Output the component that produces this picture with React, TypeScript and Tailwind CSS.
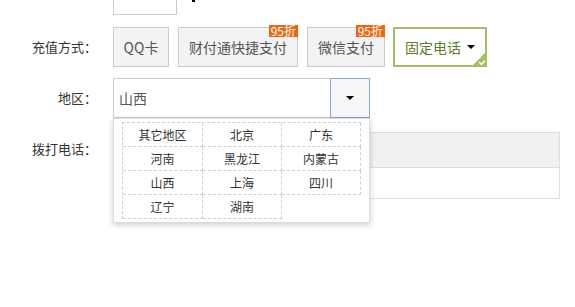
import React from "react";

const regions = ["其它地区", "北京", "广东", "河南", "黑龙江", "内蒙古", "山西", "上海", "四川", "辽宁", "湖南"];

function Badge() {
  return (
    <span className="absolute -top-[3px] -right-px h-[12px] px-[2px] bg-[#f0650e] text-white text-[12px] leading-[12px] font-['Noto_Sans_CJK_SC',sans-serif]">
      95折
    </span>
  );
}

function PayButton({ label, badge, w }: { label: string; badge?: boolean; w: string }) {
  return (
    <div className={`relative h-[40px] border border-[#cccccc] bg-[#f3f3f3] text-[14px] leading-[20px] text-[#555] flex items-center justify-center ${w}`}>
      {label}
      {badge && <Badge />}
    </div>
  );
}

export default function App() {
  return (
    <div className="relative w-[575px] h-[307px] bg-white overflow-hidden font-['Noto_Sans_CJK_SC','Liberation_Sans',sans-serif] text-[#333]">
      {/* top partial row */}
      <div className="flex">
        <div className="w-[97px]" />
        <div className="ml-[16px] w-[64px] h-[15px] border border-t-0 border-[#cccccc] bg-white" />
        <div className="ml-[15px] w-[3px] h-[2px] bg-black" />
      </div>

      {/* 充值方式 */}
      <div className="flex items-center mt-[12px]">
        <div className="w-[97px] text-right text-[13px] leading-[20px] text-[#333]">充值方式：</div>
        <div className="ml-[16px] flex">
          <PayButton label="QQ卡" w="w-[56px]" />
          <div className="ml-[9px]">
            <PayButton label="财付通快捷支付" badge w="w-[120px]" />
          </div>
          <div className="ml-[9px]">
            <PayButton label="微信支付" badge w="w-[78px]" />
          </div>
          <div className="relative ml-[8px] w-[94px] h-[40px] border-2 border-[#a3bf62] bg-white text-[14px] leading-[20px] text-[#5d7b2c] flex items-center justify-center">
            固定电话
            <span className="ml-[6px] w-0 h-0 border-x-[4px] border-x-transparent border-t-[4px] border-t-black" />
            <svg className="absolute -right-[2px] -bottom-[2px]" width="16" height="16" viewBox="0 0 16 16">
              <polygon points="16,0 16,16 0,16" fill="#a3bf62" />
              <polyline points="8,11 10.5,13.5 14,9.5" fill="none" stroke="#ffffff" strokeWidth="1.3" />
            </svg>
          </div>
        </div>
      </div>

      {/* 地区 */}
      <div className="flex items-center mt-[11px]">
        <div className="w-[97px] text-right text-[13px] leading-[20px] text-[#333]">地区：</div>
        <div className="relative ml-[16px] flex h-[40px] w-[257px] z-10">
          <div className="w-[217px] border border-r-0 border-[#cccccc] pl-[5px] text-[14px] leading-[20px] text-[#555] flex items-center bg-white">
            山西
          </div>
          <div className="w-[40px] border border-[#87a5d5] bg-[#f7f7f7] flex items-center justify-center">
            <span className="w-0 h-0 border-x-[4px] border-x-transparent border-t-[4px] border-t-black" />
          </div>
          <div className="absolute top-full left-0 w-[257px] bg-white border border-[#dddddd] shadow-[0_2px_6px_rgba(0,0,0,0.2)] pt-[3px] pb-[3px] pl-[8px]">
            <div className="grid grid-cols-[80px_79px_79px] border-t border-l border-dashed border-[#cfcfcf] w-[239px]">
              {regions.map((r) => (
                <div
                  key={r}
                  className="h-[24px] border-r border-b border-dashed border-[#cfcfcf] text-[12px] leading-[23px] text-[#333] text-center"
                >
                  {r}
                </div>
              ))}
            </div>
          </div>
        </div>
      </div>

      {/* 拨打电话 */}
      <div className="flex items-start mt-[14px]">
        <div className="w-[97px] text-right text-[13px] leading-[33px] text-[#333]">拨打电话：</div>
        <div className="ml-[16px] w-[447px] border border-[#dddddd]">
          <div className="h-[35px] bg-[#f1f1f1] border-b border-[#dddddd]" />
          <div className="h-[30px] bg-white" />
        </div>
      </div>
    </div>
  );
}
